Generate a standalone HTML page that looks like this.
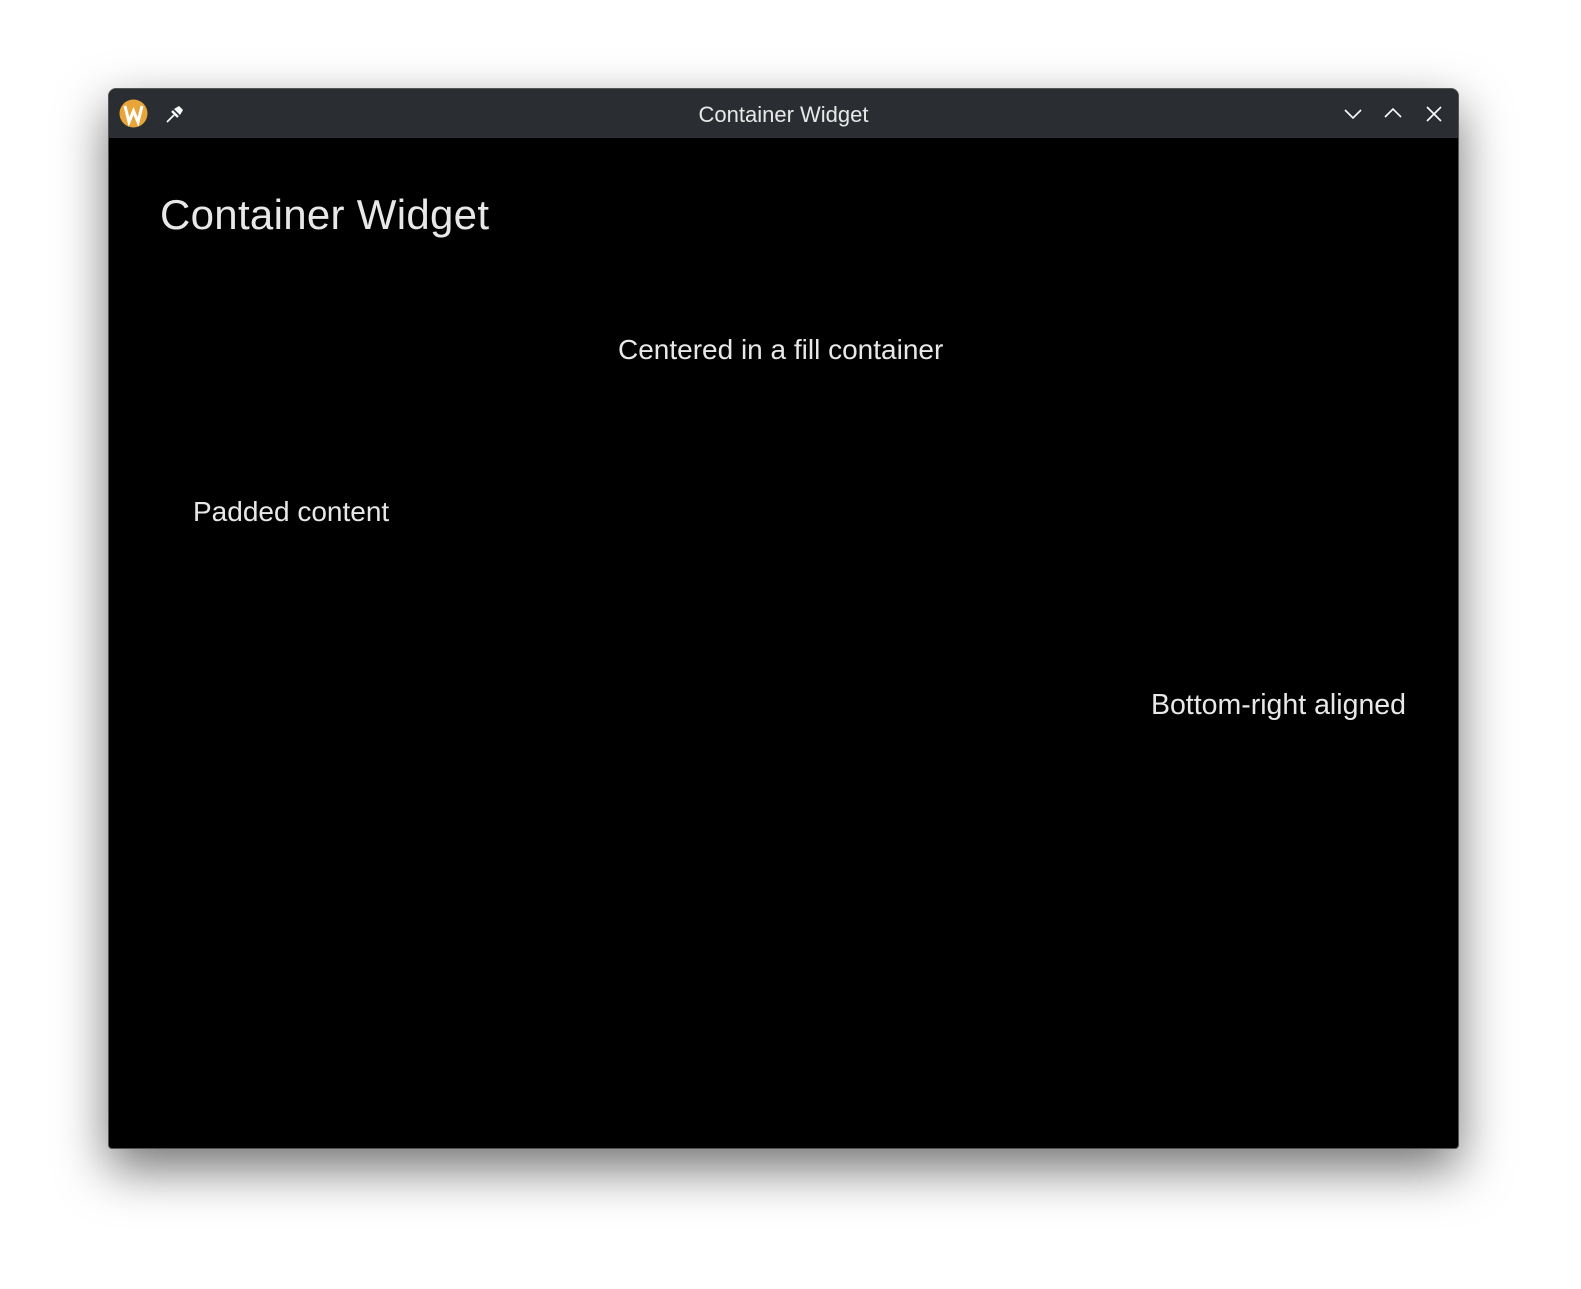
<!DOCTYPE html>
<html><head><style>
html,body{margin:0;padding:0;width:1581px;height:1289px;background:#fff;overflow:hidden;font-family:"Liberation Sans",sans-serif}
.win{position:absolute;left:108px;top:88px;width:1351px;height:1061px;background:#000;border-radius:8px 8px 4px 4px;box-shadow:0 20px 50px rgba(0,0,0,.55);overflow:hidden;border:1px solid #555;box-sizing:border-box}
.tb{position:absolute;left:0;top:0;width:100%;height:49px;background:#2a2e32}
.t{position:absolute;color:#e8e8e8;white-space:nowrap}
</style></head><body>
<div class="win">
<div class="tb">
<svg style="position:absolute;left:10px;top:10px" width="29" height="29" viewBox="0 0 29 29"><circle cx="14.5" cy="14.5" r="14" fill="#e8a53a"/><path d="M6 7 L10 23 L14.5 12 L19 23 L23 7" stroke="#fff" stroke-width="3" fill="none" stroke-linejoin="miter"/></svg>
<svg style="position:absolute;left:55px;top:14px" width="22" height="22" viewBox="0 0 22 22"><path d="M10 6 L16 12 L19 7 L15 3 Z" fill="#fff"/><path d="M8 8 L14 14" stroke="#fff" stroke-width="2.5"/><path d="M10 12 L3 19" stroke="#fff" stroke-width="1.6"/></svg>
<div class="t" style="left:0;width:100%;text-align:center;top:13px;font-size:22px">Container Widget</div>
<svg style="position:absolute;left:1233px;top:14px" width="110" height="22" viewBox="0 0 110 22"><path d="M3 7 L11 15 L19 7" stroke="#fff" stroke-width="1.6" fill="none"/><path d="M43 14 L51 6 L59 14" stroke="#fff" stroke-width="1.6" fill="none"/><path d="M85 4 L99 18 M99 4 L85 18" stroke="#fff" stroke-width="1.6"/></svg>
</div>
<div class="t" style="left:51px;top:102px;font-size:42px;letter-spacing:0.3px">Container Widget</div>
<div class="t" style="left:509px;top:245px;font-size:28px">Centered in a fill container</div>
<div class="t" style="left:84px;top:407px;font-size:28px">Padded content</div>
<div class="t" style="right:52px;top:600px;font-size:28.5px">Bottom-right aligned</div>
</div>
</body></html>
